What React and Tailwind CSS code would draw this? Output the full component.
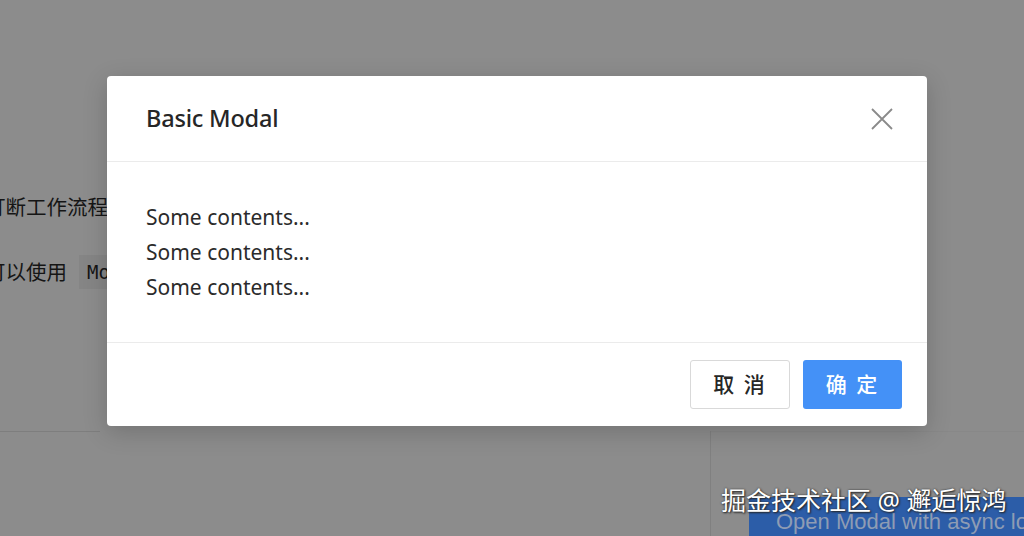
const sans = { fontFamily: '"Noto Sans", "Noto Sans CJK SC", sans-serif' };

function CloseIcon() {
  return (
    <svg width="22" height="22" viewBox="0 0 22 22" className="text-[#8a8a8a]">
      <path d="M1 1 L21 21 M21 1 L1 21" stroke="currentColor" strokeWidth="1.8" fill="none" />
    </svg>
  );
}

export default function App() {
  return (
    <div
      className="relative w-[1024px] h-[536px] overflow-hidden bg-[#8c8c8c] text-[#151515]"
      style={sans}
    >
      {/* page behind the mask */}
      <div className="flex flex-col pt-[190px]">
        <p className="ml-[-15px] text-[20.5px] leading-[34px] whitespace-nowrap">打断工作流程时，</p>
        <p className="ml-[-15px] mt-[31px] flex items-center text-[20.5px] leading-[34px] whitespace-nowrap">
          可以使用
          <code
            className="ml-[12px] px-[8px] bg-[#858585] text-[19px]"
            style={{ fontFamily: '"DejaVu Sans Mono", monospace' }}
          >
            Modal
          </code>
        </p>
        <div className="mt-[142px] flex">
          <div className="w-[100px] border-t border-[#7e7e7e]" />
          <div className="ml-[610px] h-[110px] border-l border-[#808080]" />
          <div className="flex-1 border-t border-[#888888]" />
        </div>
      </div>
      <div
        className="absolute left-[749px] top-[497px] h-[60px] w-[300px] bg-[#2c5da8] pl-[27px] pt-[10px] text-[22px] leading-[30px] text-[#8e9cb4] whitespace-nowrap"
        style={{ fontFamily: '"Liberation Sans", sans-serif' }}
      >
        Open Modal with async logic
      </div>

      {/* modal */}
      <div className="absolute left-[107px] top-[76px] w-[820px] rounded-[4px] bg-white shadow-[0_6px_24px_rgba(0,0,0,0.18)]">
        <div className="flex h-[86px] items-center justify-between border-b border-[#ebebeb] pl-[39px] pr-[34px]">
          <h2 className="text-[23.5px] font-medium text-[#262626] tracking-[-0.2px]">Basic Modal</h2>
          <CloseIcon />
        </div>
        <div className="border-b border-[#ebebeb] px-[39px] pt-[38px] pb-[37px] text-[21px] leading-[35px] text-[#2b2b2b]">
          <p>Some contents...</p>
          <p>Some contents...</p>
          <p>Some contents...</p>
        </div>
        <div className="flex h-[83px] items-center justify-end gap-[13px] pr-[25px]">
          <button className="h-[49px] w-[100px] rounded-[3px] border border-[#d9d9d9] bg-white text-[21px] font-medium text-[#262626] tracking-[2px]">
            取 消
          </button>
          <button className="h-[49px] w-[99px] rounded-[3px] bg-[#4491f7] text-[21px] font-medium text-white tracking-[2px]">
            确 定
          </button>
        </div>
      </div>

      {/* watermark */}
      <div
        className="absolute left-[721px] top-[483px] text-[25px] leading-[34px] text-white whitespace-nowrap"
        style={{ textShadow: "0 0 2px #333, 1px 1px 2px #222" }}
      >
        掘金技术社区 @ 邂逅惊鸿
      </div>
    </div>
  );
}
